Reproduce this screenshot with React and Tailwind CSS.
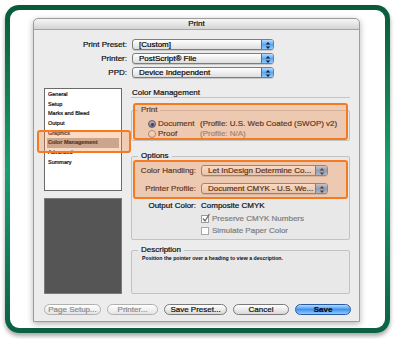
import React from "react";

const Arrows = () => (
  <svg width="12" height="11" viewBox="0 0 12 11" className="block">
    <path d="M6 2 L8.3 4.6 L3.7 4.6 Z" fill="#10203a" />
    <path d="M3.7 6.4 L8.3 6.4 L6 9 Z" fill="#10203a" />
  </svg>
);

const Popup = ({ children, className = "" }) => (
  <div className={`flex h-[11px] overflow-hidden rounded-[3px] border border-[#7d7d7d] bg-linear-to-b from-white to-[#dedede] shadow-[0_1px_0_rgba(0,0,0,0.15)] ${className}`}>
    <div className="flex-1 truncate pl-[6px] text-[8px] leading-[9px] text-[#000]">{children}</div>
    <div className="w-[12px] border-l border-[#4a6fa8] bg-linear-to-b from-[#b7dbfb] via-[#5aa6f2] to-[#8cc8fb]">
      <Arrows />
    </div>
  </div>
);

const Btn = ({ children, className = "" }) => (
  <div className={`flex h-[11px] items-center justify-center rounded-full border text-[8px] leading-none ${className}`}>
    {children}
  </div>
);

const listItems = ["General", "Setup", "Marks and Bleed", "Output", "Graphics", "Color Management", "Advanced", "Summary"];

export default function App() {
  return (
    <div className="h-[339px] w-[395px] bg-white font-['Liberation_Sans',Arial,sans-serif] text-[#0c0c0c] [-webkit-text-stroke:0.2px_currentColor]">
      <div className="ml-[5px] pt-[5px]">
        <div className="h-[328px] w-[385px] rounded-[14px] bg-linear-to-b from-[#0a5a3a] via-[#18a06f] to-[#0b6142] p-[5px] shadow-[0_3px_4px_rgba(0,0,0,0.35)]">
          <div className="h-full rounded-[9px] bg-white pl-[23px] pt-[8px]">
            <div className="flex h-[304px] w-[327px] flex-col rounded-t-[5px] border border-[#9c9c9c] bg-[#ececec] shadow-[0_2px_6px_rgba(0,0,0,0.3)]">
              <div className="flex h-[11px] items-center justify-center rounded-t-[5px] border-b border-[#a5a5a5] bg-linear-to-b from-[#f6f6f6] to-[#d4d4d4] text-[8px] leading-none">
                Print
              </div>

              <div className="flex flex-col gap-[3px] pt-[9px]">
                {[
                  ["Print Preset:", "[Custom]"],
                  ["Printer:", "PostScript® File"],
                  ["PPD:", "Device Independent"],
                ].map(([l, v]) => (
                  <div key={l} className="flex items-center gap-[5px]">
                    <div className="w-[93px] text-right text-[8px] leading-none">{l}</div>
                    <Popup className="w-[142px]">{v}</Popup>
                  </div>
                ))}
              </div>

              <div className="relative mt-[10px] flex gap-[9px] pl-[10px]">
                <div className="flex w-[78px] flex-col gap-[7px]">
                  <div className="h-[103px] border border-[#6a6a6a] bg-white pl-[2px] pr-[2px] pt-px">
                    {listItems.map((it) => (
                      <div
                        key={it}
                        className={`h-[9.7px] pl-px text-[5.5px] leading-[9.7px] ${it === "Color Management" ? "bg-[#b4b4b4] font-bold" : ""}`}
                      >
                        {it}
                      </div>
                    ))}
                  </div>
                  <div className="h-[96px] border border-[#7a7a7a] bg-[#555555]" />
                </div>

                <div className="flex w-[219px] flex-col">
                  <div className="h-[10px] border-b border-[#c4c4c4] pl-px text-[8px] leading-[9px]">Color Management</div>

                  <fieldset className="mt-[7px] h-[36px] rounded-[2px] border border-[#c2c2c2] bg-[#e8e8e8]">
                    <legend className="ml-[6px] px-[3px] text-[8px] leading-[10px]">Print</legend>
                    <div className="mt-[4px] flex flex-col pl-[16px] text-[8px] leading-[10px]">
                      <div className="flex items-center">
                        <div className="flex w-[52px] items-center gap-[2px]">
                          <div className="flex h-[8px] w-[8px] items-center justify-center rounded-full border border-[#1f3f70] bg-linear-to-b from-[#9fcdfb] to-[#1f62cc]">
                            <div className="h-[3px] w-[3px] rounded-full bg-[#0a1426]" />
                          </div>
                          <span>Document</span>
                        </div>
                        <span>(Profile: U.S. Web Coated (SWOP) v2)</span>
                      </div>
                      <div className="flex items-center">
                        <div className="flex w-[52px] items-center gap-[2px]">
                          <div className="h-[8px] w-[8px] rounded-full border border-[#8a8a8a] bg-linear-to-b from-white to-[#e2e2e2]" />
                          <span>Proof</span>
                        </div>
                        <span className="text-[#7c7c7c]">(Profile: N/A)</span>
                      </div>
                    </div>
                  </fieldset>

                  <fieldset className="mt-[10px] h-[89px] rounded-[2px] border border-[#c2c2c2] bg-[#e8e8e8]">
                    <legend className="ml-[6px] px-[3px] text-[8px] leading-[10px]">Options</legend>
                    <div className="mt-[4px] flex flex-col text-[8px] leading-none">
                      <div className="flex items-center gap-[5px]">
                        <div className="w-[64px] text-right">Color Handling:</div>
                        <Popup className="w-[127px]">Let InDesign Determine Co...</Popup>
                      </div>
                      <div className="mt-[7px] flex items-center gap-[5px]">
                        <div className="w-[64px] text-right">Printer Profile:</div>
                        <Popup className="w-[127px]">Document CMYK - U.S. We...</Popup>
                      </div>
                      <div className="mt-[7px] flex h-[10px] items-center gap-[5px]">
                        <div className="w-[64px] text-right">Output Color:</div>
                        <div>Composite CMYK</div>
                      </div>
                      <div className="mt-[3px] flex h-[10px] items-center gap-[3px] pl-[69px] text-[#7e7e7e]">
                        <div className="relative h-[8px] w-[8px] border border-[#9a9a9a] bg-white">
                          <svg width="10" height="10" viewBox="0 0 10 10" className="absolute -left-px -top-[3px]">
                            <path d="M2 5.5 L4 8 L8.5 1" stroke="#6a6a6a" strokeWidth="1.3" fill="none" />
                          </svg>
                        </div>
                        <span>Preserve CMYK Numbers</span>
                      </div>
                      <div className="mt-[2px] flex h-[10px] items-center gap-[3px] pl-[69px] text-[#7e7e7e]">
                        <div className="h-[8px] w-[8px] border border-[#a8a8a8] bg-white" />
                        <span>Simulate Paper Color</span>
                      </div>
                    </div>
                  </fieldset>

                  <fieldset className="mt-[5px] h-[49px] rounded-[2px] border border-[#c2c2c2] bg-[#e8e8e8]">
                    <legend className="ml-[6px] px-[3px] text-[8px] leading-[10px]">Description</legend>
                    <div className="pl-[10px] text-[5.2px] font-bold leading-[6px] [-webkit-text-stroke:0]">
                      Position the pointer over a heading to view a description.
                    </div>
                  </fieldset>
                </div>

                <div className="absolute left-[3px] top-[42px] h-[23px] w-[94px] rounded-[3px] border-2 border-[#f47b22] bg-[rgba(248,140,70,0.33)]" />
                <div className="absolute left-[99px] top-[15px] h-[37px] w-[215px] rounded-[3px] border-2 border-[#f47b22] bg-[rgba(248,140,70,0.33)]" />
                <div className="absolute left-[99px] top-[72px] h-[39px] w-[215px] rounded-[3px] border-2 border-[#f47b22] bg-[rgba(248,140,70,0.33)]" />
              </div>

              <div className="mt-[10px] flex gap-[6px] pl-[10px]">
                <Btn className="w-[57px] border-[#b0b0b0] bg-linear-to-b from-white to-[#e4e4e4] text-[#8a8a8a]">Page Setup...</Btn>
                <Btn className="w-[51px] border-[#b0b0b0] bg-linear-to-b from-white to-[#e4e4e4] text-[#8a8a8a]">Printer...</Btn>
                <Btn className="w-[63px] border-[#7a7a7a] bg-linear-to-b from-white to-[#d8d8d8]">Save Preset...</Btn>
                <Btn className="w-[56px] border-[#7a7a7a] bg-linear-to-b from-white to-[#d8d8d8]">Cancel</Btn>
                <Btn className="w-[56px] border-[#2a5ca6] bg-linear-to-b from-[#b4dafc] via-[#3f93ee] to-[#8fcbfc] font-bold">Save</Btn>
              </div>
            </div>
          </div>
        </div>
      </div>
    </div>
  );
}
